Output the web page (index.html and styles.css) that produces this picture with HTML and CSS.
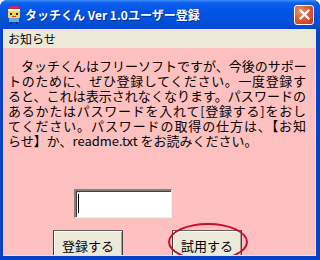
FILE: index.html
```html
<!DOCTYPE html>
<html lang="ja">
<head>
  <meta charset="UTF-8" />
  <title>タッチくん Ver 1.0ユーザー登録</title>
  <link rel="stylesheet" href="styles.css">
</head>
<body>
  <div class="window">
    <div class="titlebar">
      <svg class="app-icon" width="16" height="18" viewBox="0 0 16 18">
        <rect x="3" y="0" width="10" height="4" rx="1" fill="#d8283a" />
        <rect x="2" y="3" width="12" height="2" fill="#f4f4f4" />
        <rect x="2" y="5" width="12" height="7" rx="1" fill="#f7d64a" />
        <rect x="4" y="7" width="2" height="2" fill="#202020" />
        <rect x="10" y="7" width="2" height="2" fill="#202020" />
        <rect x="6" y="10" width="4" height="1" fill="#c0402a" />
        <rect x="3" y="12" width="10" height="4" fill="#5fa8e8" />
        <rect x="4" y="16" width="2" height="2" fill="#303030" />
        <rect x="10" y="16" width="2" height="2" fill="#303030" />
      </svg>
      <div class="title">タッチくん Ver 1.0ユーザー登録</div>
      <div class="close-btn">
        <svg width="11" height="11" viewBox="0 0 11 11">
          <path d="M1.5 1.5 L9.5 9.5 M9.5 1.5 L1.5 9.5" stroke="#fff" stroke-width="2.2" stroke-linecap="square" />
        </svg>
      </div>
    </div>

    <div class="menubar">
      <span class="menu-item">お知らせ</span>
    </div>

    <div class="content">
      <div class="message">
        <div class="line">　タッチくんはフリーソフトですが、今後のサポー</div>
        <div class="line">トのために、ぜひ登録してください。一度登録す</div>
        <div class="line">ると、これは表示されなくなります。パスワードの</div>
        <div class="line">あるかたはパスワードを入れて[登録する]をおし</div>
        <div class="line">てください。パスワードの取得の仕方は、【お知</div>
        <div class="line last">らせ】か、readme.txt をお読みください。</div>
      </div>

      <div class="password">
        <span class="caret"></span>
      </div>

      <div class="buttons">
        <div class="btn default">登録する</div>
        <div class="btn trial">
          試用する
          <div class="circle-mark"></div>
        </div>
      </div>
    </div>
  </div>
</body>
</html>
```

FILE: styles.css
```css
* {
  box-sizing: border-box;
  margin: 0;
  padding: 0;
}

body {
  width: 320px;
  height: 260px;
  overflow: hidden;
  font-family: "Noto Sans CJK JP", "Liberation Sans", sans-serif;
  background: #fff;
}

.window {
  width: 320px;
  height: 260px;
  display: flex;
  flex-direction: column;
  background: #0842c8;
  border-radius: 7px 7px 0 0;
  overflow: hidden;
}

.titlebar {
  height: 29px;
  display: flex;
  align-items: center;
  padding: 0 6px 0 6px;
  background: linear-gradient(#3c8cf8 0px, #0a5eec 3px, #0054e3 12px, #0050dc 22px, #0046cc 29px);
}

.app-icon {
  margin-right: 3px;
}

.title {
  flex: 1;
  color: #fff;
  font-size: 12px;
  font-weight: bold;
  text-shadow: 1px 1px 0 #0a2e8a;
}

.close-btn {
  width: 20px;
  height: 20px;
  border: 1px solid #fff;
  border-radius: 3px;
  background: radial-gradient(circle at 30% 30%, #f09070, #e0502c 55%, #c43818);
  display: flex;
  align-items: center;
  justify-content: center;
}

.menubar {
  height: 19px;
  margin: 0 4px 0 3px;
  background: #ece9d8;
  display: flex;
  align-items: center;
  padding-left: 5px;
  font-size: 12px;
  color: #000;
}

.content {
  flex: 1;
  margin: 0 4px 4px 3px;
  background: #ffc0c0;
  border-right: 1px solid #e8e0e8;
  border-bottom: 1px solid #e8e0e8;
  padding: 10px 0 0 5px;
  overflow: hidden;
}

.message {
  width: 298px;
  font-size: 13px;
  line-height: 15px;
  color: #000;
}

.line {
  text-align: justify;
  text-align-last: justify;
  white-space: nowrap;
}

.line.last {
  text-align-last: left;
}

.password {
  width: 98px;
  height: 29px;
  margin: 41px 0 0 66px;
  background: #fff;
  border-top: 2px solid #808080;
  border-left: 2px solid #808080;
  border-right: 1px solid #f0f0f0;
  border-bottom: 1px solid #f0f0f0;
  box-shadow: inset 1px 1px 0 #404040;
  padding: 3px 0 0 2px;
}

.caret {
  display: block;
  width: 1px;
  height: 19px;
  background: #000;
}

.buttons {
  display: flex;
  gap: 49px;
  margin: 12px 0 0 45px;
}

.btn {
  position: relative;
  width: 70px;
  height: 30px;
  background: #ece9d8;
  border: 1px solid #404040;
  border-top-color: #606060;
  box-shadow: inset 1px 1px 0 #fff, inset -1px -1px 0 #a0a0a0;
  font-size: 13px;
  display: flex;
  justify-content: center;
  padding-top: 5px;
  color: #000;
}

.circle-mark {
  position: absolute;
  left: -5px;
  top: -8px;
  width: 80px;
  height: 38px;
  border: 2px solid #c41028;
  border-radius: 50%;
}
```
